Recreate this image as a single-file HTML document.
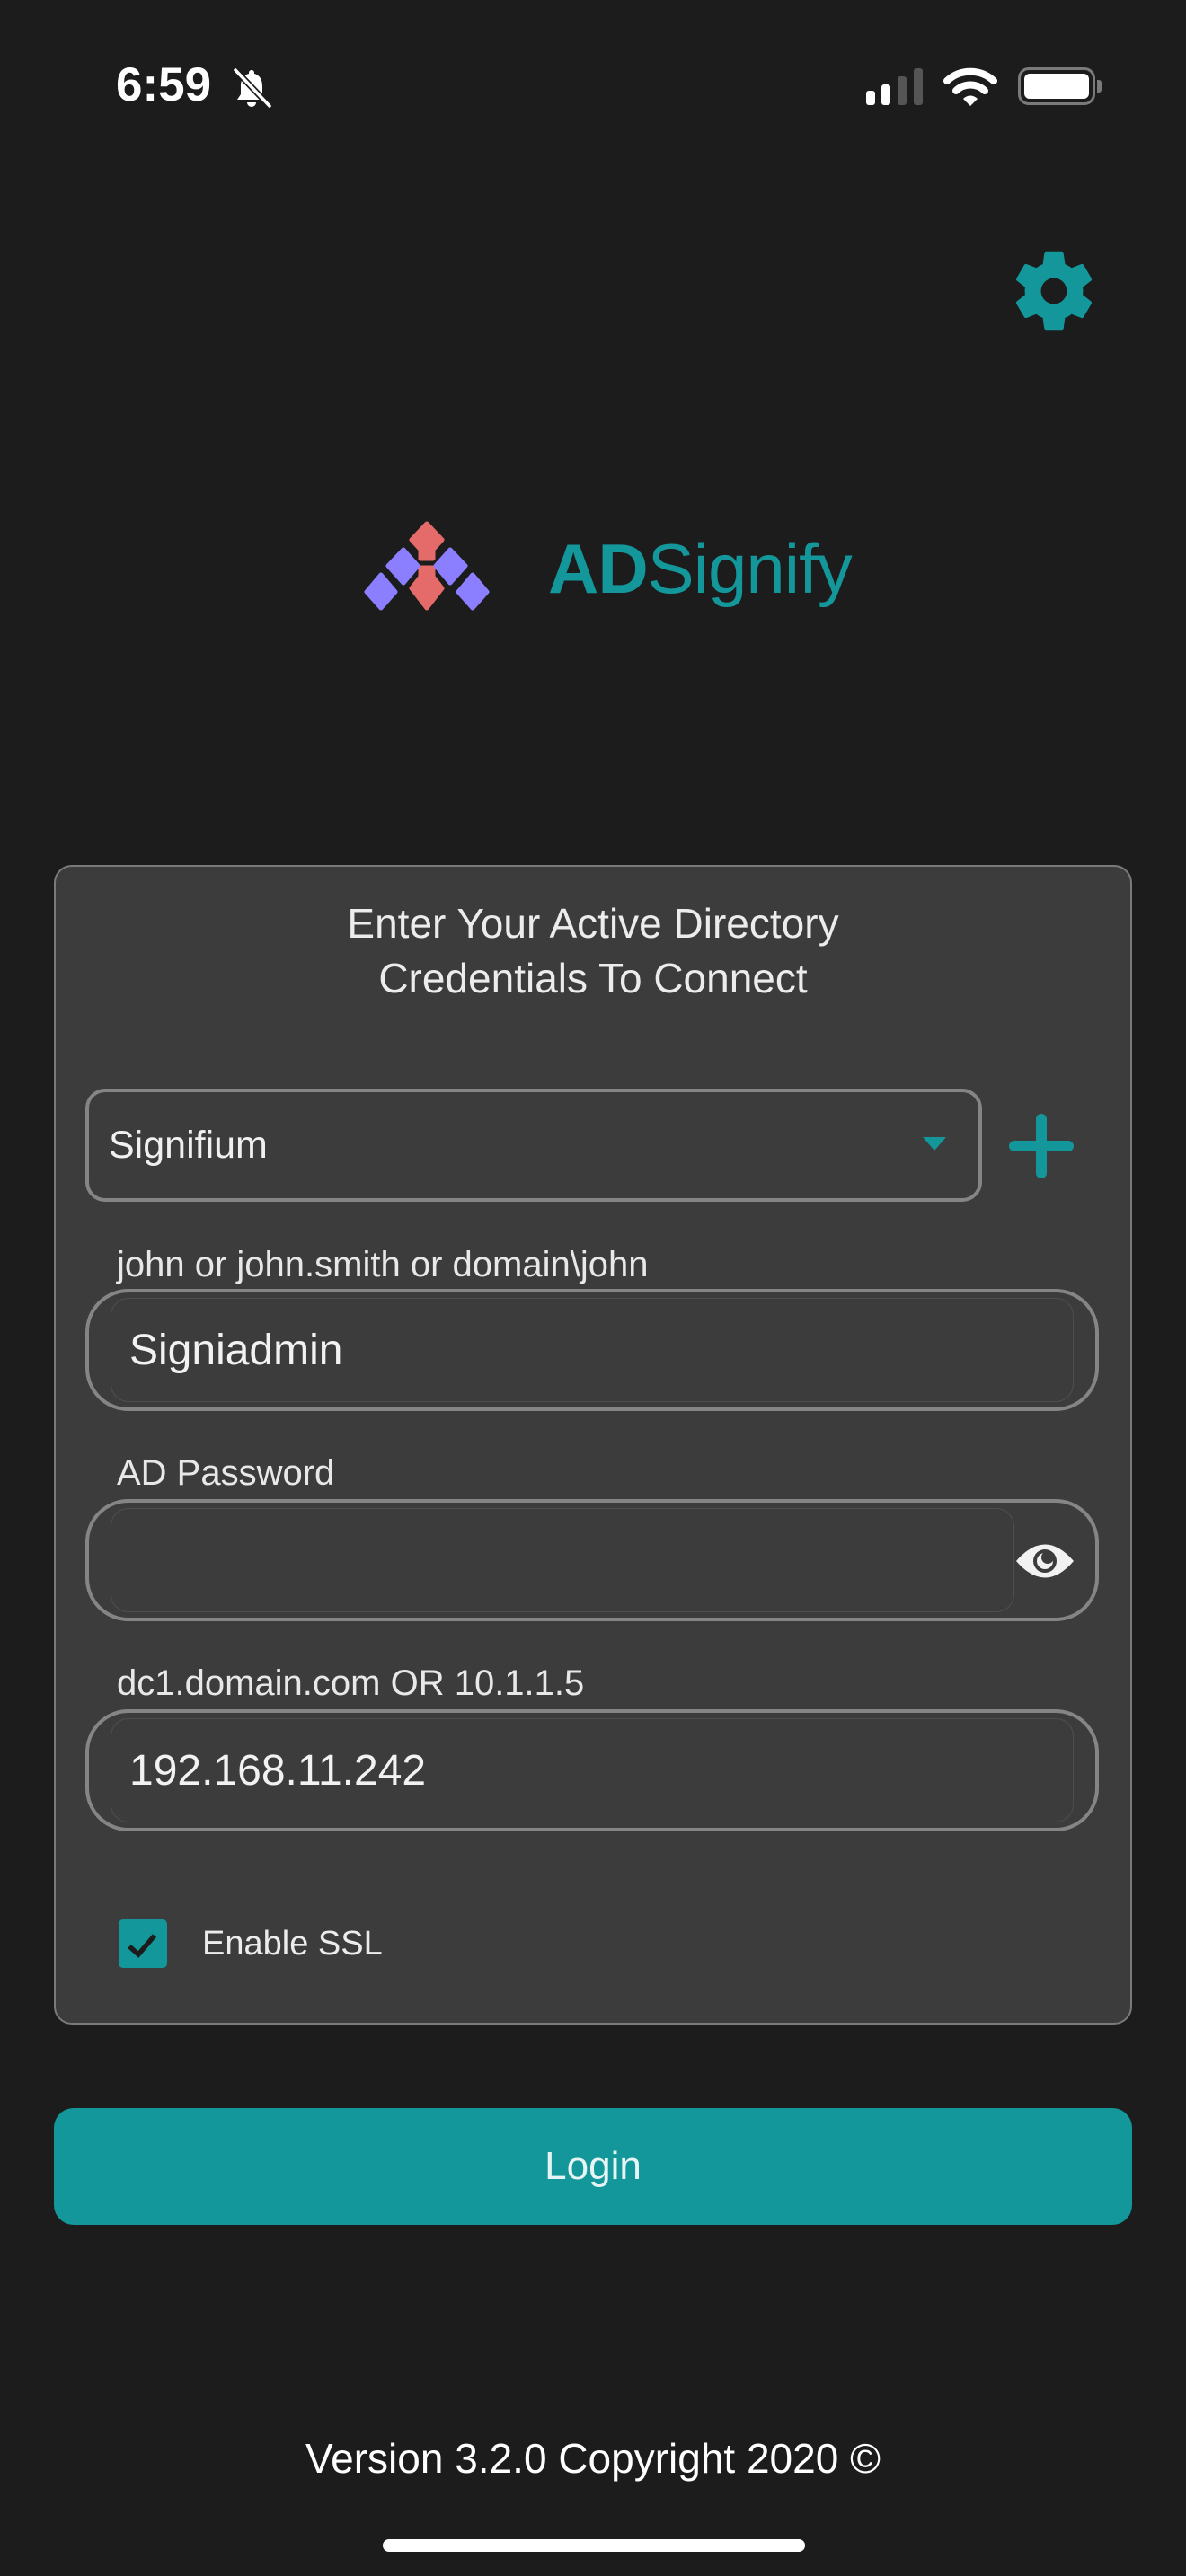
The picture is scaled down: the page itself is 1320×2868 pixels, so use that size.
<!DOCTYPE html>
<html><head><meta charset="utf-8"><style>
*{margin:0;padding:0;box-sizing:border-box}
body{width:1320px;height:2868px;background:#1c1c1c;position:relative;overflow:hidden;font-family:"Liberation Sans",sans-serif;color:#ececec}
.a{position:absolute}
.card{left:60px;top:963px;width:1200px;height:1291px;background:#3c3c3c;border:2px solid #7a7a7a;border-radius:20px}
.field{left:95px;width:1128px;height:136px;border:4px solid #858585;border-radius:48px}
.inner{position:absolute;left:24px;top:6px;bottom:6px;border:1.5px solid #4f4f4f;border-radius:20px}
.lbl{font-size:40px;color:#e8e8e8;left:130px;white-space:nowrap}
.val{font-size:48px;color:#f2f2f2;left:144px}
</style></head><body>
<!-- status bar -->
<div class="a" style="left:129px;top:64px;font-size:53px;font-weight:bold;color:#fff">6:59</div>
<svg class="a" style="left:256px;top:74px" width="48" height="48" viewBox="0 0 48 48">
<path d="M24 4c-2 0-3 1.5-3 3v1C14 10 12 16 12 22v9l-4 6h32l-4-6v-9c0-6-2-12-9-14V7c0-1.5-1-3-3-3zM19 40a5 5 0 0 0 10 0z" fill="#fff"/>
<line x1="6" y1="4" x2="44" y2="44" stroke="#1c1c1c" stroke-width="7"/>
<line x1="6" y1="4" x2="44" y2="44" stroke="#fff" stroke-width="3.5" stroke-linecap="round"/>
</svg>
<div class="a" style="left:964px;top:101px;width:10px;height:16px;background:#fff;border-radius:3px"></div>
<div class="a" style="left:981px;top:94px;width:10px;height:23px;background:#fff;border-radius:3px"></div>
<div class="a" style="left:999px;top:85px;width:10px;height:32px;background:#555;border-radius:3px"></div>
<div class="a" style="left:1017px;top:76px;width:10px;height:41px;background:#555;border-radius:3px"></div>
<svg class="a" style="left:1050px;top:74px" width="60" height="44" viewBox="0 0 60 44">
<path d="M4 16A38 38 0 0 1 56 16" stroke="#fff" stroke-width="8" fill="none" stroke-linecap="round"/>
<path d="M14 27A23 23 0 0 1 46 27" stroke="#fff" stroke-width="8" fill="none" stroke-linecap="round"/>
<path d="M22 36L30 44L38 36A11 11 0 0 0 22 36z" fill="#fff"/>
</svg>
<div class="a" style="left:1133px;top:75px;width:86px;height:42px;border:3.5px solid #7a7a7a;border-radius:12px"></div>
<div class="a" style="left:1140px;top:82px;width:72px;height:28px;background:#fff;border-radius:6px"></div>
<div class="a" style="left:1221px;top:89px;width:5px;height:14px;background:#7a7a7a;border-radius:0 3px 3px 0"></div>
<!-- gear -->
<svg class="a" style="left:1119px;top:270px" width="108" height="108" viewBox="0 0 24 24"><path fill="#14979a" d="M19.14,12.94c0.04-0.3,0.06-0.61,0.06-0.94c0-0.32-0.02-0.64-0.07-0.94l2.03-1.58c0.18-0.14,0.23-0.41,0.12-0.61 l-1.920-3.32c-0.12-0.22-0.37-0.29-0.59-0.22l-2.39,0.96c-0.5-0.38-1.03-0.7-1.62-0.94L14.4,2.81c-0.04-0.24-0.24-0.41-0.48-0.41 h-3.84c-0.24,0-0.43,0.17-0.47,0.41L9.25,5.35C8.66,5.59,8.12,5.920,7.63,6.29L5.24,5.33c-0.22-0.08-0.47,0-0.59,0.22L2.74,8.87 C2.62,9.08,2.66,9.34,2.86,9.48l2.03,1.58C4.84,11.36,4.8,11.690,4.8,12s0.02,0.64,0.07,0.94l-2.03,1.58 c-0.18,0.14-0.23,0.41-0.12,0.61l1.92,3.32c0.12,0.22,0.37,0.29,0.59,0.22l2.39-0.96c0.5,0.38,1.03,0.7,1.62,0.94l0.36,2.54 c0.05,0.24,0.24,0.41,0.48,0.41h3.84c0.24,0,0.44-0.17,0.47-0.41l0.36-2.54c0.59-0.24,1.13-0.56,1.62-0.94l2.39,0.96 c0.22,0.08,0.470,0,0.59-0.22l1.92-3.32c0.12-0.22,0.07-0.47-0.12-0.61L19.14,12.94z M12,15.2c-1.77,0-3.2-1.43-3.2-3.2 s1.43-3.2,3.2-3.2s3.2,1.43,3.2,3.2S13.77,15.2,12,15.2z"/></svg>
<!-- logo -->
<svg class="a" style="left:400px;top:570px" width="150" height="120" viewBox="400 570 150 120">
<g stroke-linejoin="round" stroke-width="5">
<polygon points="475,583 492,601 482,612 482,622 468,622 468,612 458,601" fill="#e56b6b" stroke="#e56b6b"/>
<polygon points="468,632 482,632 482,642 492,655 475,677 458,655 468,642" fill="#e56b6b" stroke="#e56b6b"/>
<polygon points="449,612 465,630 449,649 432,630" fill="#8b7fff" stroke="#8b7fff"/>
<polygon points="501,612 518,630 501,649 485,630" fill="#8b7fff" stroke="#8b7fff"/>
<polygon points="424,640 440,659 424,677 408,659" fill="#8b7fff" stroke="#8b7fff"/>
<polygon points="526,640 542,659 526,677 510,659" fill="#8b7fff" stroke="#8b7fff"/>
</g></svg>
<div class="a" style="left:610px;top:588px;font-size:78px;color:#14979a;letter-spacing:-1px;white-space:nowrap"><b>AD</b>Signify</div>
<!-- card -->
<div class="a card"></div>
<div class="a" style="left:60px;width:1200px;top:998px;text-align:center;font-size:46px;line-height:61px;color:#ececec">Enter Your Active Directory<br>Credentials To Connect</div>
<div class="a" style="left:95px;top:1212px;width:998px;height:126px;border:4px solid #858585;border-radius:22px"></div>
<div class="a" style="left:121px;top:1251px;font-size:43px;color:#f0f0f0">Signifium</div>
<div class="a" style="left:1027px;top:1266px;width:0;height:0;border-left:13px solid transparent;border-right:13px solid transparent;border-top:15px solid #14979a"></div>
<div class="a" style="left:1153px;top:1240px;width:12px;height:72px;background:#14979a;border-radius:6px"></div>
<div class="a" style="left:1123px;top:1270px;width:72px;height:12px;background:#14979a;border-radius:6px"></div>

<div class="a lbl" style="top:1386px">john or john.smith or domain\john</div>
<div class="a field" style="top:1435px"><div class="inner" style="right:24px"></div></div>
<div class="a val" style="top:1476px">Signiadmin</div>

<div class="a lbl" style="top:1618px">AD Password</div>
<div class="a field" style="top:1669px"><div class="inner" style="right:90px"></div></div>
<svg class="a" style="left:1128px;top:1713px" width="70" height="50" viewBox="0 0 70 50">
<path d="M3 25Q35 -12 67 25Q35 62 3 25z" fill="#f2f2f2"/>
<circle cx="35" cy="25" r="13" fill="#3c3c3c"/><circle cx="35" cy="25" r="9" fill="#f2f2f2"/>
<circle cx="38" cy="21" r="7" fill="#3c3c3c"/>
</svg>

<div class="a lbl" style="top:1852px">dc1.domain.com OR 10.1.1.5</div>
<div class="a field" style="top:1903px"><div class="inner" style="right:24px"></div></div>
<div class="a val" style="top:1944px">192.168.11.242</div>

<div class="a" style="left:132px;top:2137px;width:54px;height:54px;background:#13979a;border-radius:5px"></div>
<svg class="a" style="left:132px;top:2137px" width="54" height="54" viewBox="0 0 54 54"><path d="M12 30L22 39L40 18" stroke="#1c1c1c" stroke-width="5.5" fill="none"/></svg>
<div class="a" style="left:225px;top:2143px;font-size:38px;color:#ececec">Enable SSL</div>
<!-- login -->
<div class="a" style="left:60px;top:2347px;width:1200px;height:130px;background:#13979a;border-radius:22px;text-align:center;line-height:130px;font-size:44px;color:#e6f4f4">Login</div>
<div class="a" style="left:0;width:1320px;top:2710px;text-align:center;font-size:46px;color:#fff">Version 3.2.0 Copyright 2020 ©</div>
<div class="a" style="left:426px;top:2827px;width:470px;height:14px;background:#fff;border-radius:7px"></div>
</body></html>
